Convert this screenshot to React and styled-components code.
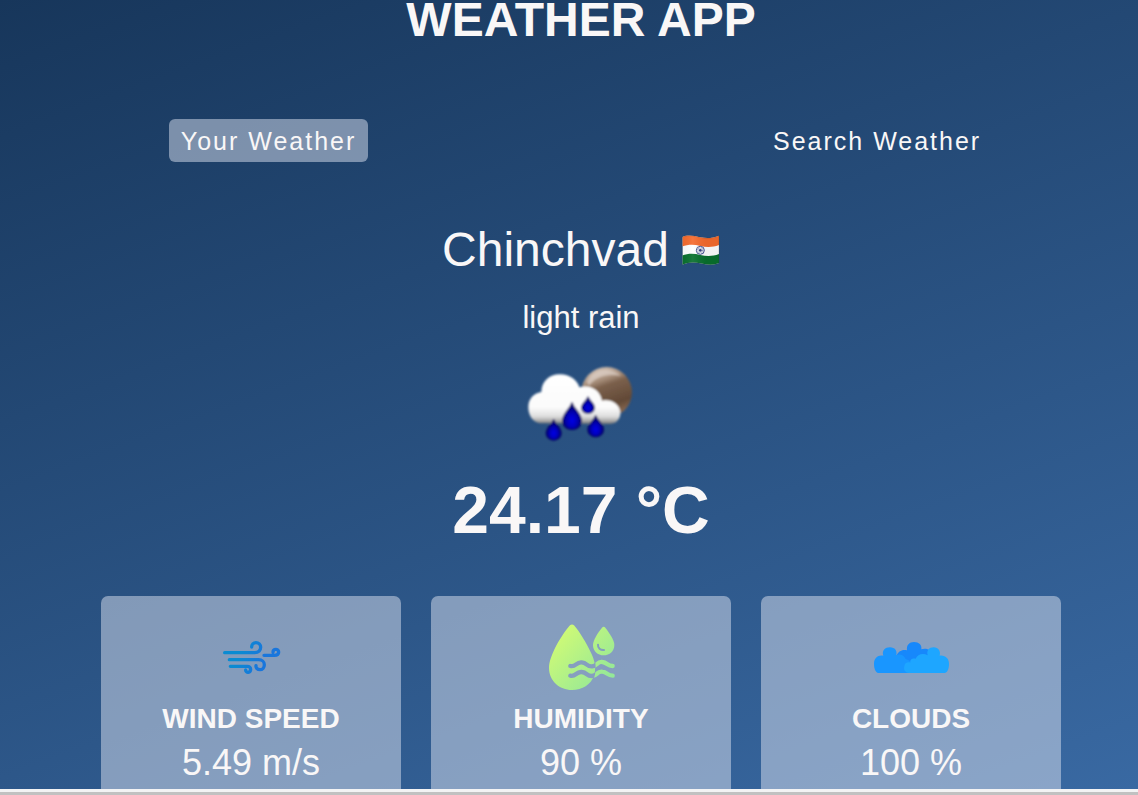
import React from "react";
import styled, { createGlobalStyle } from "styled-components";

const GlobalStyle = createGlobalStyle`
  *, *::before, *::after { box-sizing: border-box; margin: 0; padding: 0; }
  body { font-family: "Liberation Sans", Arial, sans-serif; color: #f9f7f7; }
`;

const Page = styled.div`
  height: 100vh;
  display: flex;
  flex-direction: column;
  overflow: hidden;
`;

const Wrapper = styled.main`
  flex: 1;
  min-height: 0;
  overflow: hidden;
  padding-left: 24px;
  display: flex;
  flex-direction: column;
  align-items: center;
  background: linear-gradient(160deg, #112d4e -18%, #3f72af 118%);

  > * { flex-shrink: 0; }
`;

const Title = styled.h1`
  font-size: 48px;
  line-height: 40px;
  font-weight: 700;
  white-space: nowrap;
`;

const Tabs = styled.nav`
  width: 74%;
  margin-top: 79px;
  display: flex;
  justify-content: space-between;
`;

const Tab = styled.button`
  height: 43px;
  padding: 2px 12px 0;
  border: 0;
  border-radius: 6px;
  background: ${({ $active }) => ($active ? "rgba(219, 226, 239, 0.5)" : "transparent")};
  color: inherit;
  font-family: inherit;
  font-size: 25px;
  letter-spacing: 2px;
  cursor: pointer;
`;

const City = styled.div`
  margin-top: 60px;
  display: flex;
  align-items: center;
  gap: 12px;
`;

const CityName = styled.h2`
  font-size: 48px;
  line-height: 56px;
  font-weight: 400;
`;

const Description = styled.p`
  margin-top: 22px;
  font-size: 31px;
  line-height: 36px;
`;

const WeatherArt = styled.div`
  margin-top: 19px;
  height: 95px;
`;

const Temperature = styled.p`
  margin-top: 24px;
  font-size: 66px;
  line-height: 72px;
  font-weight: 700;
`;

const Cards = styled.section`
  margin-top: 50px;
  display: flex;
  justify-content: center;
  gap: 30px;
`;

const Card = styled.article`
  width: 300px;
  padding: 21px 16px 24px;
  display: flex;
  flex-direction: column;
  align-items: center;
  border-radius: 7px;
  background: rgba(219, 226, 239, 0.5);
`;

const CardIcon = styled.svg`
  width: 80px;
  height: 80px;
`;

const CardTitle = styled.h3`
  margin-top: 6px;
  font-size: 28px;
  line-height: 32px;
  font-weight: 700;
  text-transform: uppercase;
`;

const CardValue = styled.p`
  margin-top: 8px;
  font-size: 36px;
  line-height: 40px;
`;

const ScrollTrack = styled.div`
  flex: none;
  height: 6px;
  padding-top: 3px;
  background: #f3f3f4;
`;

const ScrollThumb = styled.div`
  height: 3px;
  background: #c1c1c1;
`;

const flagShape =
  "M757 78 C775 70 793 75 811 79 S849 82 867 74 V156 C849 164 829 161 811 157 S775 153 757 161 Z";

function IndiaFlag() {
  return (
    <svg width="39" height="31" viewBox="753 72 117 93" role="img" aria-label="India">
      <defs>
        <clipPath id="flagClip"><path d={flagShape} /></clipPath>
        <linearGradient id="flagShade">
          <stop offset="0" stopColor="#000" stopOpacity="0.03" />
          <stop offset="0.3" stopColor="#fff" stopOpacity="0.08" />
          <stop offset="0.65" stopColor="#000" stopOpacity="0.05" />
          <stop offset="1" stopColor="#000" stopOpacity="0.05" />
        </linearGradient>
      </defs>
      <g clipPath="url(#flagClip)">
        <rect x="753" y="70" width="117" height="95" fill="#fff" />
        <path d="M753 65 H870 V101 C849 110 829 109 811 105 S775 99 753 108 Z" fill="#f56a2c" />
        <path d="M753 135 C775 126 793 128 811 132 S849 137 870 128 V170 H753 Z" fill="#08702d" />
        <g fill="none" stroke="#3b4a8c">
          <circle cx="811" cy="118" r="12" strokeWidth="3" />
          <circle cx="811" cy="118" r="7" strokeWidth="5" strokeDasharray="1.5 2" opacity="0.65" />
        </g>
        <circle cx="811" cy="118" r="4" fill="#30397c" />
        <rect x="753" y="70" width="117" height="95" fill="url(#flagShade)" />
      </g>
      <path d={flagShape} fill="none" stroke="#263238" strokeOpacity="0.3" strokeWidth="2" />
    </svg>
  );
}

const drops = [
  "M116 194 C121 210 138 218 138 235 A22 20 0 0 1 94 235 C94 218 111 210 116 194 Z",
  "M171 143 C178 164 199 175 199 198 A28 25 0 0 1 143 198 C143 175 164 164 171 143 Z",
  "M219 126 C224 139 238 145 238 158 A19 17 0 0 1 200 158 C200 145 214 139 219 126 Z",
  "M242 182 C248 198 265 206 265 224 A23 21 0 0 1 219 224 C219 206 236 198 242 182 Z",
];

function RainCloud() {
  return (
    <svg width="132" height="95" viewBox="0 0 396 285" role="img" aria-label="Light rain">
      <defs>
        <linearGradient id="moon" x1="0.3" y1="0" x2="0.65" y2="1">
          <stop offset="0" stopColor="#d9c8bb" />
          <stop offset="0.26" stopColor="#a58c78" />
          <stop offset="0.38" stopColor="#7b604c" />
          <stop offset="0.75" stopColor="#624936" />
          <stop offset="1" stopColor="#937158" />
        </linearGradient>
        <linearGradient id="cloud" gradientUnits="userSpaceOnUse" x1="0" y1="58" x2="0" y2="208">
          <stop offset="0" stopColor="#fff" />
          <stop offset="0.66" stopColor="#fbfbfb" />
          <stop offset="0.84" stopColor="#dedede" />
          <stop offset="0.93" stopColor="#aaa9a8" />
          <stop offset="1" stopColor="#65696e" />
        </linearGradient>
        <radialGradient id="drop" cx="0.5" cy="0.66" r="0.55">
          <stop offset="0" stopColor="#0000e8" />
          <stop offset="0.5" stopColor="#0000b8" />
          <stop offset="1" stopColor="#020064" />
        </radialGradient>
        <filter id="soft" x="-5%" y="-5%" width="110%" height="110%">
          <feGaussianBlur stdDeviation="2.6" />
        </filter>
      </defs>
      <g filter="url(#soft)">
        <circle cx="275" cy="112" r="76" fill="url(#moon)" />
        <path d="M216 80 C237 41 287 34 318 63 C280 54 243 63 222 92 Z" fill="#eadfd7" opacity="0.55" />
        <path
          d="M74 205 C53 201 40 182 40 157 C40 132 55 115 79 111 C80 80 102 58 135 58 C164 58 187 75 193 97 C226 88 255 105 261 137 C290 130 316 149 316 174 C316 193 304 205 286 207 Z"
          fill="url(#cloud)"
        />
        <g fill="url(#drop)" stroke="#030066" strokeWidth="4" strokeLinejoin="round">
          {drops.map((d) => <path key={d} d={d} />)}
        </g>
      </g>
    </svg>
  );
}

function WindIcon() {
  return (
    <CardIcon viewBox="3 -39 240 240" aria-hidden="true">
      <defs>
        <linearGradient id="wind" gradientUnits="userSpaceOnUse" x1="115" y1="0" x2="180" y2="25">
          <stop offset="0" stopColor="#0b8bd2" />
          <stop offset="1" stopColor="#1976dc" />
        </linearGradient>
      </defs>
      <g fill="none" stroke="url(#wind)" strokeWidth="10" strokeLinecap="round">
        <path d="M44 68 H134 C146 68 152 60 152 52 C152 43 146 38 138 38 C130 38 125 44 125 51" />
        <path d="M162 76 H193 C201 76 206 72 206 66 C206 56 189 55 189 67" />
        <path d="M58 89 H146 C156 89 163 96 163 104 C163 113 157 119 150 119 C142 119 137 114 138 107" />
        <path d="M61 109 H112 C118 109 122 113 122 118 C122 129 107 130 107 120" />
      </g>
    </CardIcon>
  );
}

function HumidityIcon() {
  const waves = [
    "M106 153 C123 157 123 140 140 142 C157 144 155 155 171 154 C188 153 185 139 202 141 C217 142 216 153 233 153",
    "M106 182 C123 186 123 169 140 171 C157 173 155 184 171 183 C188 182 185 168 202 170 C217 171 216 182 233 182",
  ];
  return (
    <CardIcon viewBox="18 6 240 240" aria-hidden="true">
      <defs>
        <linearGradient id="humid" gradientUnits="userSpaceOnUse" x1="58" y1="55" x2="225" y2="205">
          <stop offset="0" stopColor="#d2fb74" />
          <stop offset="1" stopColor="#91e79a" />
        </linearGradient>
        <mask id="waveCut" maskUnits="userSpaceOnUse" x="18" y="6" width="240" height="240">
          <rect x="18" y="6" width="240" height="240" fill="#fff" />
          <g fill="none" stroke="#000" strokeWidth="13" strokeLinecap="round">
            {waves.map((d) => <path key={d} d={d} />)}
          </g>
        </mask>
        <clipPath id="waveRight">
          <path d="M178 125 C183 148 185 176 173 198 H250 V125 Z" />
        </clipPath>
      </defs>
      <path
        d="M105 31 Q111 26 117 31 C135 52 154 84 168 113 C180 137 184 162 177 182 C168 208 142 225 111 225 C73 225 42 197 42 159 C42 121 82 57 105 31 Z"
        fill="url(#humid)"
        mask="url(#waveCut)"
      />
      <g fill="none" stroke="url(#humid)" strokeWidth="13" strokeLinecap="round" clipPath="url(#waveRight)">
        {waves.map((d) => <path key={d} d={d} />)}
      </g>
      <path
        d="M201 38 Q206 33 211 38 C223 54 238 75 238 90 C238 108 224 121 206 121 C188 121 174 108 174 90 C174 75 189 53 201 38 Z"
        fill="url(#humid)"
      />
      <path d="M189 89 C188 99 196 106 207 105" fill="none" stroke="#849fbf" strokeWidth="6" strokeLinecap="round" />
    </CardIcon>
  );
}

function CloudsIcon() {
  return (
    <CardIcon viewBox="33 -39 240 240" aria-hidden="true">
      <path
        d="M109 78 C114 64 127 57 141 61 C139 45 148 36 162 36 C177 36 186 45 184 58 C200 53 216 60 222 79 V125 H109 Z"
        fill="#1788fb"
      />
      <path
        d="M54 129 C46 126 42 114 42 101 C42 84 54 74 70 77 C65 62 75 52 90 52 C105 52 112 63 109 75 C121 70 133 76 137 87 C154 91 156 103 155 129 Z"
        fill="#1996ff"
      />
      <path
        d="M147 129 C135 128 130 119 133 109 C133 99 143 95 151 98 C149 88 158 84 167 86 C172 72 190 68 203 76 C199 62 207 52 221 52 C235 52 243 64 239 77 C257 75 267 87 267 101 C267 117 263 126 255 129 Z"
        fill="#1ea6ff"
      />
    </CardIcon>
  );
}

const readings = [
  { title: "Wind speed", value: "5.49 m/s", Icon: WindIcon },
  { title: "Humidity", value: "90 %", Icon: HumidityIcon },
  { title: "Clouds", value: "100 %", Icon: CloudsIcon },
];

export default function App() {
  return (
    <Page>
      <GlobalStyle />
      <Wrapper>
        <Title>WEATHER APP</Title>
        <Tabs>
          <Tab type="button" $active>Your Weather</Tab>
          <Tab type="button">Search Weather</Tab>
        </Tabs>
        <City>
          <CityName>Chinchvad</CityName>
          <IndiaFlag />
        </City>
        <Description>light rain</Description>
        <WeatherArt><RainCloud /></WeatherArt>
        <Temperature>24.17 °C</Temperature>
        <Cards>
          {readings.map(({ title, value, Icon }) => (
            <Card key={title}>
              <Icon />
              <CardTitle>{title}</CardTitle>
              <CardValue>{value}</CardValue>
            </Card>
          ))}
        </Cards>
      </Wrapper>
      <ScrollTrack><ScrollThumb /></ScrollTrack>
    </Page>
  );
}
